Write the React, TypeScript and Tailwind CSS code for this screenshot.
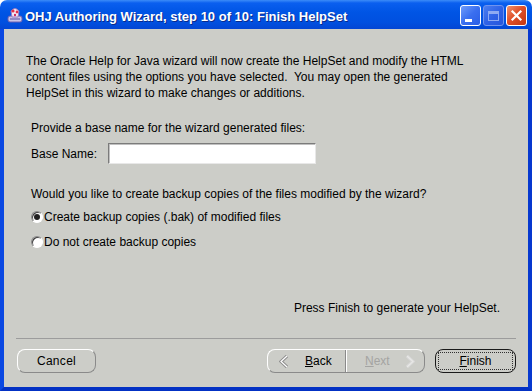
import React from 'react';

// XP-style window chrome for the Oracle Help wizard, final step
const TitleButton = ({ kind }: { kind: 'min' | 'max' | 'close' }) => {
  if (kind === 'close') {
    return (
      <div className="w-[21px] h-[21px] rounded-[3px] border border-white bg-[linear-gradient(135deg,#f0936e,#e0502a_45%,#c4360f)] flex items-center justify-center">
        <svg width="13" height="13" viewBox="0 0 13 13">
          <path d="M2.5 2.5 L10.5 10.5 M10.5 2.5 L2.5 10.5" stroke="#ffffff" strokeWidth="2.2" strokeLinecap="square" />
        </svg>
      </div>
    );
  }
  const faded = kind === 'max';
  return (
    <div
      className={`w-[21px] h-[21px] rounded-[3px] border flex items-center justify-center ${
        faded
          ? 'border-[#6f93ee] bg-[linear-gradient(135deg,#4c7ef0,#2f62e6_50%,#2556dc)]'
          : 'border-white bg-[linear-gradient(135deg,#6f9cfa,#3a6ff0_50%,#2a5ee6)]'
      }`}
    >
      {kind === 'min' ? (
        <div className="w-[7px] h-[3px] bg-white mt-[9px] -ml-[4px]" />
      ) : (
        <div className="w-[11px] h-[10px] border border-[#8eaaf2] border-t-[3px]" />
      )}
    </div>
  );
};

const Radio = ({ checked, label }: { checked: boolean; label: string }) => (
  <div className="flex items-center h-[20px]">
    <div className="w-[12px] h-[12px] rounded-full border border-[#8a8a8a] border-b-white border-r-white bg-white flex items-center justify-center shadow-[inset_1px_1px_0_#404040]">
      {checked && <div className="w-[6px] h-[6px] rounded-full bg-[#202020]" />}
    </div>
    <span className="ml-[1px]">{label}</span>
  </div>
);

const Chevron = ({ dir, disabled }: { dir: 'left' | 'right'; disabled?: boolean }) => (
  <svg width="10" height="13" viewBox="0 0 10 13">
    <path
      d={dir === 'left' ? 'M8 1 L2 6.5 L8 12' : 'M2 1 L8 6.5 L2 12'}
      fill="none"
      stroke={disabled ? '#d8d8d8' : '#8c8c8c'}
      strokeWidth="3.2"
      strokeLinejoin="miter"
    />
    <path
      d={dir === 'left' ? 'M8 1 L2 6.5 L8 12' : 'M2 1 L8 6.5 L2 12'}
      fill="none"
      stroke={disabled ? '#e8e8e6' : '#ffffff'}
      strokeWidth="1.2"
    />
  </svg>
);

const App = () => {
  return (
    <div className="w-[532px] h-[391px] flex flex-col font-['Liberation_Sans',Arial,sans-serif] text-[12px] text-black">
      {/* Title bar */}
      <div className="h-[29px] flex items-start rounded-t-[7px] bg-[linear-gradient(to_bottom,#3c8cf8_0px,#0a5fef_3px,#0055e5_12px,#0050e0_22px,#0346d4_29px)] pl-[7px] pr-[5px]">
        <svg width="16" height="16" viewBox="0 0 16 16" className="mt-[7px]">
          <rect x="1" y="9" width="14" height="6" rx="2" fill="#c9c4e8" stroke="#6a5fb0" strokeWidth="1" />
          <path d="M4 4 Q8 -1 12 4 L11 10 L5 10 Z" fill="#f4eef8" stroke="#9a7ac0" strokeWidth="1" />
          <circle cx="6" cy="4" r="1.6" fill="#e0304a" />
          <circle cx="10" cy="5" r="1.4" fill="#e0304a" />
          <circle cx="8" cy="8" r="1.2" fill="#d02a60" />
          <path d="M3 12 L13 12" stroke="#5a4fa0" strokeWidth="1" />
        </svg>
        <span className="ml-[2px] mt-[9px] leading-[16px] text-[13px] font-bold text-white [text-shadow:1px_1px_0_#0a2a8a]">
          OHJ Authoring Wizard, step 10 of 10: Finish HelpSet
        </span>
        <div className="ml-auto mt-[5px] flex gap-[2px]">
          <TitleButton kind="min" />
          <TitleButton kind="max" />
          <TitleButton kind="close" />
        </div>
      </div>

      {/* Window body */}
      <div className="flex-1 flex border-l-4 border-r-4 border-b-4 border-l-[#0a48e2] border-r-[#0638cf] border-b-[#0331c4]">
        <div className="flex-1 flex flex-col bg-[#cccdc8] leading-[16px]">
          <p className="pt-[24px] pl-[22px]">
            The Oracle Help for Java wizard will now create the HelpSet and modify the HTML
            <br />
            content files using the options you have selected.&nbsp; You may open the generated
            <br />
            HelpSet in this wizard to make changes or additions.
          </p>

          <div className="pl-[27px]">
            <div className="mt-[19px]">Provide a base name for the wizard generated files:</div>
            <div className="mt-[7px] flex items-center">
              <span className="w-[77px]">Base Name:</span>
              <div className="w-[208px] h-[21px] bg-white border border-[#7b7b7b] border-b-[#e8e8e8] border-r-[#e8e8e8] shadow-[inset_1px_1px_0_#c0c0c0]" />
            </div>
            <div className="mt-[22px]">Would you like to create backup copies of the files modified by the wizard?</div>
            <div className="mt-[5px]">
              <Radio checked label="Create backup copies (.bak) of modified files" />
            </div>
            <div className="mt-[5px]">
              <Radio checked={false} label="Do not create backup copies" />
            </div>
          </div>

          <div className="flex-1" />

          <div className="text-right pr-[28px]">Press Finish to generate your HelpSet.</div>

          <div className="mt-[22px] mx-[12px] h-[1px] bg-[#9c9c9c]" />

          {/* Buttons */}
          <div className="mt-[10px] mb-[14px] h-[24px] flex pl-[13px] pr-[12px]">
            <button className="w-[79px] h-[24px] rounded-[8px] border border-white border-b-[#8a8a8a] border-r-[#8a8a8a] tracking-[0.3px]">
              Cancel
            </button>
            <div className="ml-auto flex h-[24px] rounded-[8px] border border-white border-b-[#8a8a8a] border-r-[#8a8a8a]">
              <div className="w-[78px] flex items-center pl-[11px] border-r border-r-[#8a8a8a]">
                <Chevron dir="left" />
                <span className="ml-[16px]">
                  <span className="underline">B</span>ack
                </span>
              </div>
              <div className="w-[78px] flex items-center pl-[18px] border-l border-l-white text-[#a4a4a2]">
                <span>
                  <span className="underline">N</span>ext
                </span>
                <span className="ml-[15px]">
                  <Chevron dir="right" disabled />
                </span>
              </div>
            </div>
            <button className="ml-[10px] w-[81px] h-[24px] rounded-[8px] border border-[#1a1a1a] p-[2px]">
              <div className="h-full border border-dotted border-[#303030] flex items-center justify-center">
                <span>
                  <span className="underline">F</span>inish
                </span>
              </div>
            </button>
          </div>
        </div>
      </div>
    </div>
  );
};

export default App;
